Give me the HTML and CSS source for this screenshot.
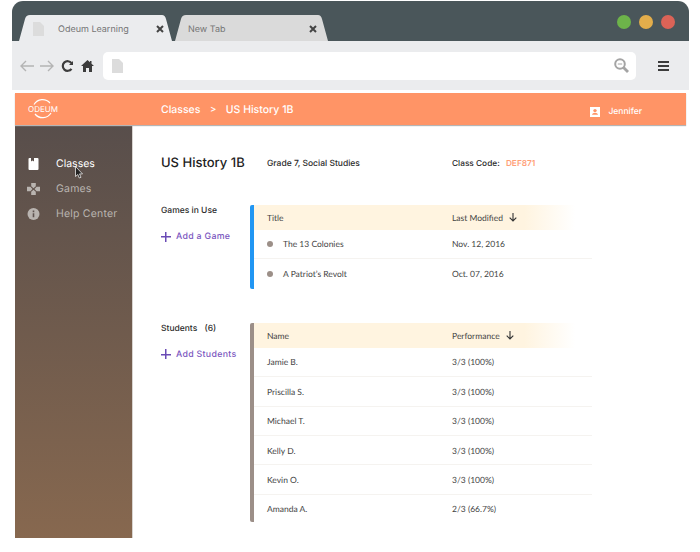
FILE: index.html
```html
<!DOCTYPE html>
<html lang="en">
<head>
    <meta charset="UTF-8">
    <meta name="viewport" content="width=device-width, initial-scale=1.0">
    <title>Odeum Learning</title>
    <link rel="stylesheet" href="styles.css">
</head>
<body>

    <div class="window">
        <div class="titlebar">
            <div class="tabs">
                <div class="tab tab-active">
                    <svg class="page-icon" width="11" height="14" viewBox="0 0 11 14"><path d="M0 0h7l4 4v10H0z" fill="#dcdcdc"/></svg>
                    <span class="tab-name">Odeum Learning</span>
                    <svg class="tab-close" width="8" height="8" viewBox="0 0 8 8"><path d="m1 1 6 6M7 1 1 7" stroke="#444" stroke-width="2"/></svg>
                </div>
                <div class="tab tab-other">
                    <span class="tab-name">New Tab</span>
                    <svg class="tab-close" width="8" height="8" viewBox="0 0 8 8"><path d="m1 1 6 6M7 1 1 7" stroke="#444" stroke-width="2"/></svg>
                </div>
            </div>
            <div class="lights">
                <span class="light green"></span>
                <span class="light yellow"></span>
                <span class="light red"></span>
            </div>
        </div>
        <div class="toolbar">
            <svg class="nav-icon" width="14" height="12" viewBox="0 0 14 12"><path d="M14 6H1.500M6 1 1 6l5 5" fill="none" stroke="#b4b4b4" stroke-width="1.400"/></svg>
            <svg class="nav-icon" width="14" height="12" viewBox="0 0 14 12"><path d="M0 6h12.500M8 1l5 5-5 5" fill="none" stroke="#b4b4b4" stroke-width="1.400"/></svg>
            <svg class="nav-icon" width="12" height="12" viewBox="0 0 12 12"><path d="M10.500 3.200A4.800 4.800 0 1 0 10.500 8.800" fill="none" stroke="#3c3c3c" stroke-width="2.200"/><path d="M12 1v4H8z" fill="#3c3c3c"/></svg>
            <svg class="nav-icon" width="13" height="12" viewBox="0 0 13 12"><path d="M6.500 0 0 6h2v6h3V8h3v4h3V6h2L10.500 3.700V1H9v1.300z" fill="#3c3c3c"/></svg>
            <div class="address">
                <svg width="11" height="14" viewBox="0 0 11 14"><path d="M0 0h7l4 4v10H0z" fill="#dcdcdc"/></svg>
                <svg width="15" height="15" viewBox="0 0 15 15"><circle cx="6" cy="6" r="4.800" fill="none" stroke="#a4a4a4" stroke-width="2"/><path d="M3.800 6h4.400" stroke="#a4a4a4"/><path d="m9.500 9.500 4.500 4.500" stroke="#a4a4a4" stroke-width="2.800"/></svg>
            </div>
            <div class="menu-icon"><span></span><span></span><span></span></div>
        </div>
    </div>

    <div class="app">
        <header class="app-header">
            <svg class="logo" width="32" height="24" viewBox="0 0 32 24">
                <path d="M7 7.500A9.800 9.800 0 0 1 23 6M24 16A9.800 9.800 0 0 1 8 17" fill="none" stroke="#fff" stroke-width="1.200"/>
                <text x="16" y="15" text-anchor="middle" class="logo-text">ODEUM</text>
            </svg>
            <div class="crumbs">
                <span>Classes</span>
                <span class="crumb-sep">&gt;</span>
                <span>US History 1B</span>
            </div>
            <div class="user">
                <svg width="10" height="10" viewBox="0 0 10 10"><path d="M0 0h10v10H0z" fill="#fff"/><circle cx="5" cy="3.600" r="1.700" fill="#ff9466"/><path d="M2 7.800c0-1.300 1.800-2 3-2s3 .7 3 2z" fill="#ff9466"/></svg>
                <span>Jennifer</span>
            </div>
        </header>

        <div class="app-body">
            <aside class="sidebar">
                <a class="side-link side-active">
                    <svg width="10" height="12" viewBox="0 0 10 12"><path d="M1 0h1.500v3.500L4 2.500l1.500 1V0H9a1 1 0 0 1 1 1v10a1 1 0 0 1-1 1H1a1 1 0 0 1-1-1V1a1 1 0 0 1 1-1z" fill="#fff"/></svg>
                    <span>Classes</span>
                </a>
                <a class="side-link">
                    <svg width="13" height="12" viewBox="0 0 13 12"><path d="M4.200 0h4.600v3.200L6.500 5.200 4.200 3.200zM4.200 12V8.800l2.300-2 2.300 2V12zM0 3.800h3.400L5.500 6 3.400 8.200H0zM13 3.800H9.600L7.500 6l2.100 2.200H13z" fill="#b9b4b0"/></svg>
                    <span>Games</span>
                </a>
                <a class="side-link">
                    <svg width="12" height="12" viewBox="0 0 12 12"><circle cx="6" cy="6" r="6" fill="#b9b4b0"/><path d="M5.200 5.200h1.600v4H5.200zM5.200 2.600h1.600v1.600H5.200z" fill="#5f5450"/></svg>
                    <span>Help Center</span>
                </a>
                <svg class="cursor" width="9" height="13" viewBox="0 0 9 13"><path d="M.5.500v10l2.300-2 1.500 3.500 1.700-.7-1.500-3.400h3z" fill="#222" stroke="#fff" stroke-width=".7"/></svg>
            </aside>

            <main class="content">
                <div class="class-info">
                    <h1>US History 1B</h1>
                    <div class="grade">Grade 7, Social Studies</div>
                    <div class="code">Class Code: <b>DEF871</b></div>
                </div>

                <section class="block block-games">
                    <div class="block-side">
                        <h2>Games in Use</h2>
                        <a class="add-link"><span class="plus"></span>Add a Game</a>
                    </div>
                    <div class="data-table blue-bar">
                        <div class="data-row data-head">
                            <div>Title</div>
                            <div>Last Modified <svg class="sort" width="8" height="9" viewBox="0 0 8 9"><path d="M4 0v8M.7 4.700 4 8l3.300-3.300" fill="none" stroke="#333" stroke-width="1.100"/></svg></div>
                        </div>
                        <div class="data-row">
                            <div class="game"><span class="dot"></span>The 13 Colonies</div>
                            <div>Nov. 12, 2016</div>
                        </div>
                        <div class="data-row">
                            <div class="game"><span class="dot"></span>A Patriot’s Revolt</div>
                            <div>Oct. 07, 2016</div>
                        </div>
                    </div>
                </section>

                <section class="block">
                    <div class="block-side">
                        <h2>Students <span class="count">(6)</span></h2>
                        <a class="add-link"><span class="plus"></span>Add Students</a>
                    </div>
                    <div class="data-table grey-bar">
                        <div class="data-row data-head">
                            <div>Name</div>
                            <div>Performance <svg class="sort" width="8" height="9" viewBox="0 0 8 9"><path d="M4 0v8M.7 4.700 4 8l3.300-3.300" fill="none" stroke="#333" stroke-width="1.100"/></svg></div>
                        </div>
                        <div class="data-row"><div>Jamie B.</div><div>3/3 (100%)</div></div>
                        <div class="data-row"><div>Priscilla S.</div><div>3/3 (100%)</div></div>
                        <div class="data-row"><div>Michael T.</div><div>3/3 (100%)</div></div>
                        <div class="data-row"><div>Kelly D.</div><div>3/3 (100%)</div></div>
                        <div class="data-row"><div>Kevin O.</div><div>3/3 (100%)</div></div>
                        <div class="data-row"><div>Amanda A.</div><div>2/3 (66.7%)</div></div>
                    </div>
                </section>
            </main>
        </div>
    </div>

</body>
</html>
```

FILE: styles.css
```css
* {
    box-sizing: border-box;
}

body {
    margin: 0;
    height: 552px;
    overflow: hidden;
    background-color: #fff;
    font-family: "Lato", "Liberation Sans", sans-serif;
    color: #333;
    text-rendering: geometricPrecision;
}

/* browser chrome */
.window {
    margin: 1px 11px 0 12px;
}

.titlebar {
    height: 40px;
    background-color: #4a565a;
    border-radius: 11px 11px 0 0;
    display: flex;
    justify-content: space-between;
    padding: 14px 14px 0 7px;
}

.tabs {
    display: flex;
}

.tab {
    width: 153px;
    height: 26px;
    display: flex;
    align-items: center;
    font-size: 9px;
    font-family: "Inter", sans-serif;
    color: #757575;
    clip-path: path("M0 26 L6 4 Q7 0 11 0 H143 Q146 0 147 4 L153 26 Z");
    padding-top: 2px;
}

.tab-active {
    background-color: #ebecee;
    padding-left: 14px;
    padding-right: 8px;
    position: relative;
    z-index: 1;
}

.tab-other {
    background-color: #dadada;
    margin-left: 3px;
    padding-left: 13px;
    padding-right: 11px;
}

.page-icon {
    margin-right: 14px;
}

.tab-name {
    flex: 1;
}

.lights {
    display: flex;
    gap: 8px;
}

.light {
    width: 14px;
    height: 14px;
    border-radius: 50%;
}

.green { background-color: #6db34a; }
.yellow { background-color: #e3ad4b; }
.red { background-color: #db6357; }

.toolbar {
    height: 49px;
    background-color: #ebecee;
    display: flex;
    align-items: center;
    padding: 0 19px 0 8px;
}

.nav-icon {
    margin-right: 6px;
}

.nav-icon:nth-child(3) {
    margin-left: 1px;
    margin-right: 8px;
}

.nav-icon:nth-child(4) {
    margin-right: 9px;
}

.address {
    width: 533px;
    height: 28px;
    background-color: #fff;
    border-radius: 5px;
    display: flex;
    align-items: center;
    justify-content: space-between;
    padding: 0 7px 0 9px;
}

.menu-icon {
    margin-left: 22px;
    width: 11px;
    display: flex;
    flex-direction: column;
    gap: 2px;
}

.menu-icon span {
    height: 2px;
    background-color: #3c3c3c;
}

/* app */
.app {
    margin: 3px 14px 0 15px;
}

.app-header {
    height: 32px;
    background-color: #ff9466;
    box-shadow: 0 1px 1px #b5b5b5;
    color: #fff;
    display: flex;
    align-items: center;
    position: relative;
    z-index: 1;
}

.logo {
    margin-left: 12px;
}

.logo-text {
    font-family: "Inter", sans-serif;
    font-size: 8px;
    fill: #fff;
}

.crumbs {
    margin-left: 102px;
    font-family: "Inter", sans-serif;
    font-size: 10.500px;
    font-weight: 500;
    display: flex;
    gap: 9.500px;
    flex: 1;
}

.crumb-sep {
    font-size: 9.500px;
    line-height: 13px;
}

.user {
    display: flex;
    align-items: center;
    gap: 8px;
    font-family: "Inter", sans-serif;
    font-size: 8.500px;
    font-weight: 500;
    margin-right: 44px;
    padding-top: 6px;
}

.app-body {
    display: flex;
    height: 413px;
}

.sidebar {
    width: 117px;
    background: linear-gradient(#584e4b, #87684f);
    padding-top: 26px;
    position: relative;
    box-shadow: 1px 0 0 #d8d4d0;
}

.side-link {
    height: 25px;
    display: flex;
    align-items: center;
    font-family: "Inter", sans-serif;
    font-size: 10.500px;
    letter-spacing: .2px;
    color: #b9b4b0;
    padding-left: 12px;
}

.side-link svg {
    width: 13px;
    margin-right: 16px;
}

.side-active {
    color: #fff;
    letter-spacing: 0;
}

.cursor {
    position: absolute;
    left: 60px;
    top: 41px;
}

.content {
    flex: 1;
    padding: 28px 0 0 29px;
}

.class-info {
    display: flex;
    align-items: center;
    height: 19px;
    font-family: "Inter", sans-serif;
    font-size: 8.500px;
    font-weight: 500;
    color: #2b2b2b;
}

h1 {
    margin: 0;
    width: 106px;
    font-size: 13px;
    font-weight: 500;
    color: #222;
}

.grade {
    width: 185px;
    padding-top: 3px;
}

.code {
    font-size: 8.300px;
    padding-top: 3px;
}

.code b {
    margin-left: 4px;
    font-weight: 600;
    color: #ff9f78;
}

.block {
    display: flex;
}

.block-games {
    margin-top: 33px;
    margin-bottom: 34px;
}

.block-side {
    width: 89px;
    font-family: "Inter", sans-serif;
}

h2 {
    margin: 0;
    padding-top: 1px;
    font-size: 8.500px;
    font-weight: 500;
    line-height: 11px;
    color: #2b2b2b;
}

.count {
    margin-left: 5px;
}

.add-link {
    display: flex;
    align-items: center;
    margin-top: 14px;
    font-size: 8.800px;
    font-weight: 500;
    letter-spacing: .3px;
    color: #7b57c0;
}

.plus {
    width: 10px;
    height: 10px;
    margin-right: 5px;
    background:
        linear-gradient(#6a4bb5, #6a4bb5) center / 100% 1.500px no-repeat,
        linear-gradient(#6a4bb5, #6a4bb5) center / 1.500px 100% no-repeat;
}

.data-table {
    width: 342px;
    font-size: 8.500px;
    color: #444;
    border-left: 4px solid;
    border-radius: 2px;
}

.blue-bar { border-color: #2196f3; }
.grey-bar { border-color: #9c8f88; }

.data-row {
    display: grid;
    grid-template-columns: 185px 1fr;
    align-items: center;
    height: 29.400px;
    padding-left: 13px;
    padding-bottom: 1px;
    border-bottom: 1px solid #f5f3f0;
}

.data-row:last-child {
    border-bottom: none;
}

.grey-bar .data-row {
    padding-bottom: 0;
    padding-top: 1px;
}

.grey-bar .data-row:last-child {
    height: 27px;
}

.data-head {
    height: 25px;
    padding-bottom: 0;
    padding-top: 1px;
    border-bottom: none;
    background: linear-gradient(90deg, #fff4e0 0, #fff4e0 80%, #fff 95%);
}

.grey-bar .data-head {
    height: 25px;
}

.sort {
    margin-left: 4px;
    vertical-align: -1px;
}

.game {
    display: flex;
    align-items: center;
}

.dot {
    width: 6px;
    height: 6px;
    border-radius: 50%;
    background-color: #9c8f88;
    margin-right: 10px;
}
```
